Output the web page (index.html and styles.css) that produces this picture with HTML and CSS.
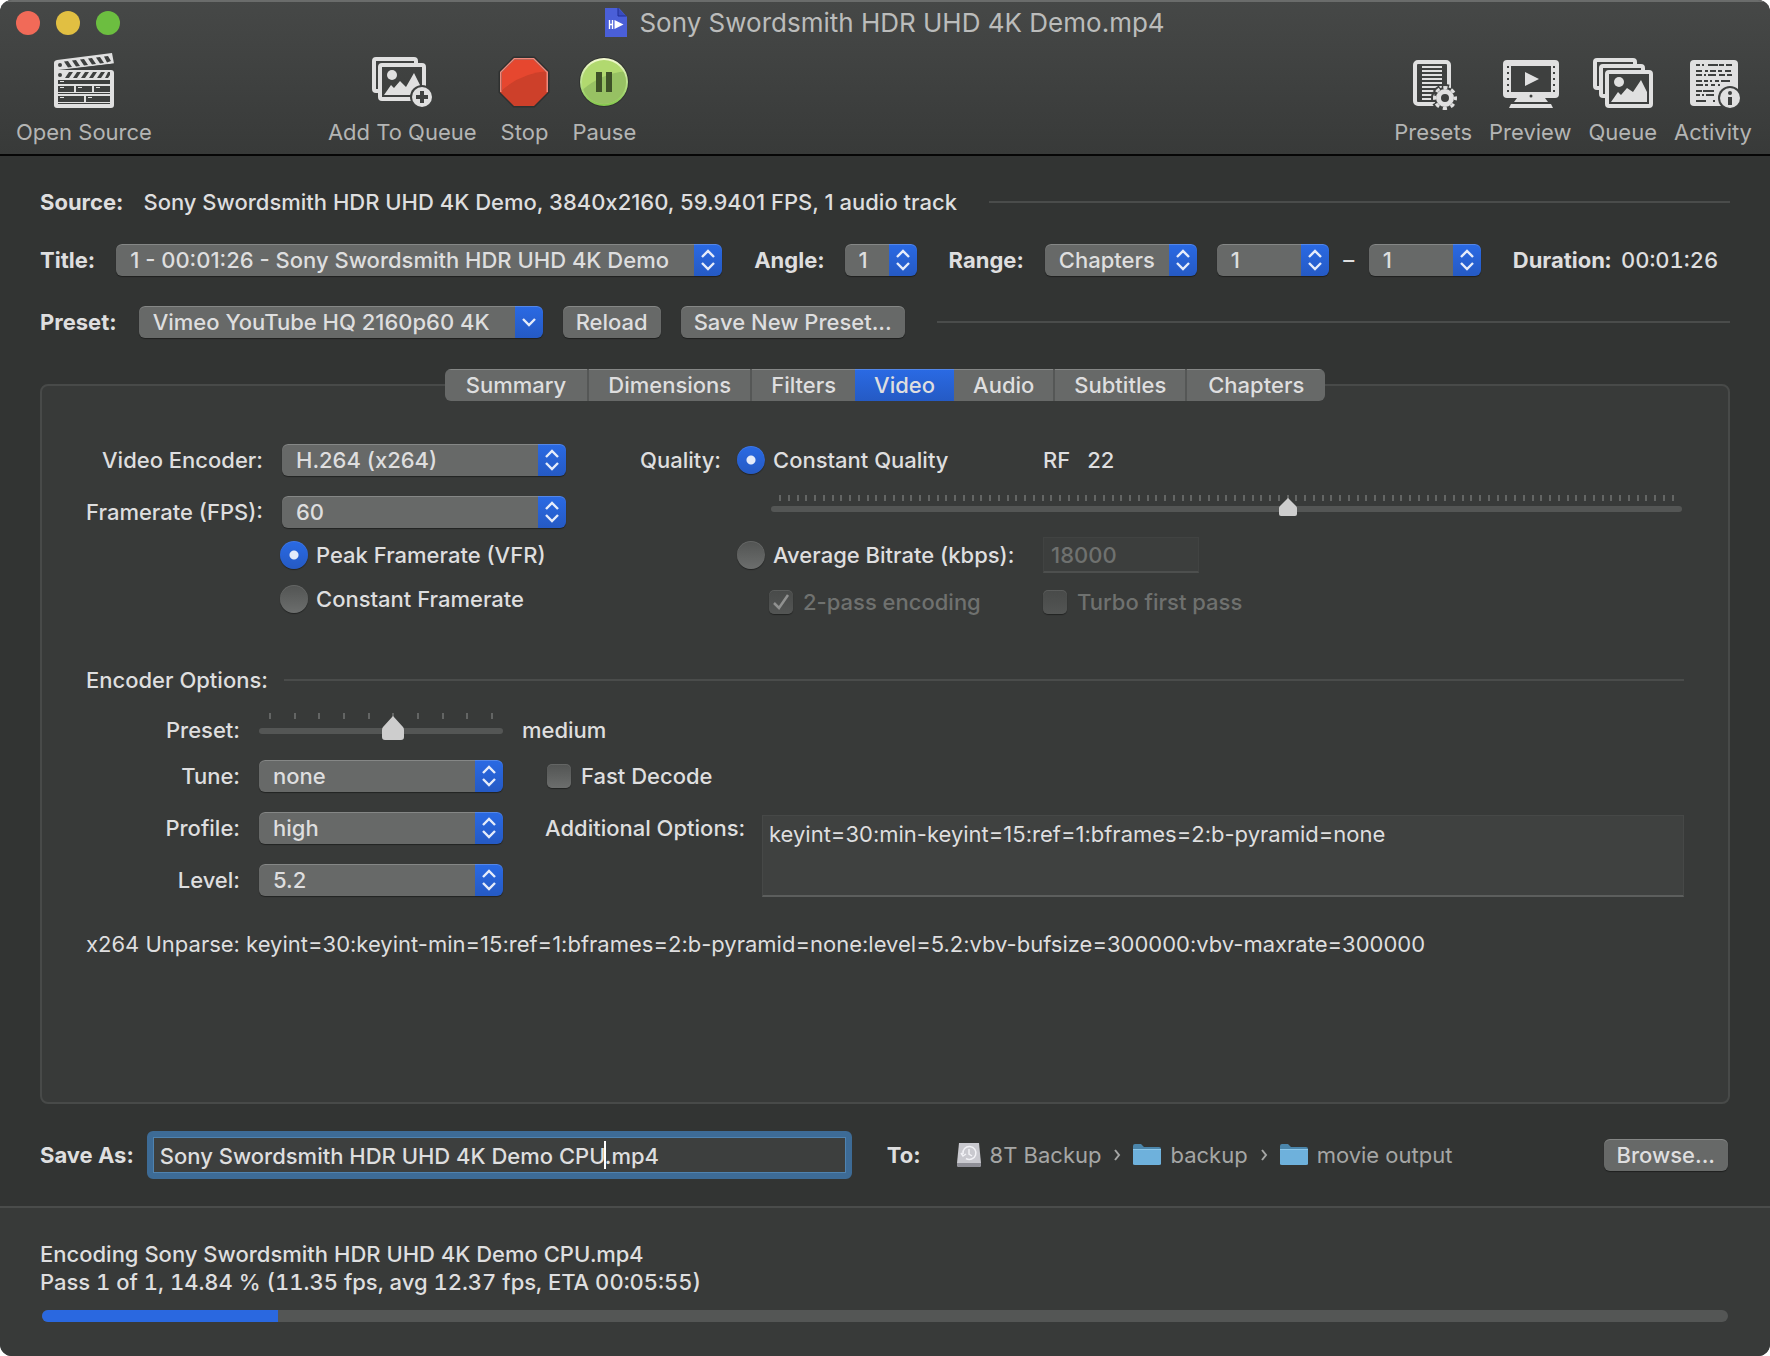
FILE: index.html
```html
<!DOCTYPE html>
<html lang="en">
<head>
<meta charset="utf-8">
<title>Sony Swordsmith HDR UHD 4K Demo.mp4</title>
<link rel="stylesheet" href="styles.css">
</head>
<body>
<div class="window">
  <header class="header">
    <div class="titlebar">
      <div class="lights">
        <button class="light light-close" aria-label="Close"></button>
        <button class="light light-min" aria-label="Minimize"></button>
        <button class="light light-zoom" aria-label="Zoom"></button>
      </div>
      <h1 class="title">
        <svg width="22" height="30" viewBox="0 0 22 30" aria-hidden="true">
          <path d="M0 0h14l8 9v20H0z" fill="#4a5fd8"/>
          <path d="M13 0v8h8" fill="#3a4cc0" stroke="#1e2f96"/>
          <path d="M4.500 12v9M7.500 12v9M4 16.500h4" stroke="#fff" stroke-width="1.400"/>
          <path d="M9.500 12l9 4.500-9 4.500z" fill="#fff"/>
        </svg>
        Sony Swordsmith HDR UHD 4K Demo.mp4
      </h1>
    </div>
    <div class="toolbar">
      <button class="tool tool-open">
        <span class="tool-icon">
          <svg width="60" height="58" viewBox="0 0 60 58" fill="#e0e0e0">
            <path d="M3 7L58 0l2 10.500L0 17.500V10q0-2.500 3-3z"/>
            <path d="M0 17h57q3 0 3 3v32q0 3-3 3H3q-3 0-3-3z"/>
            <g fill="#3e403f">
              <circle cx="6" cy="12" r="2"/><circle cx="6" cy="22" r="2"/>
              <path d="M12 16.500L60 10.500v6.500H12z"/>
              <path d="M10 8.500l4-.5 4 6-4 .5zM18 7.500l4-.5 4 6-4 .5zM26 6.500l4-.5 4 6-4 .5zM34 5.500l4-.5 4 6-4 .5zM42 4.500l4-.5 4 6-4 .5zM50 3.500l4-.5 3 5-4 1.500z"/>
              <path d="M15 19h4l-4 6h-4zM23 19h4l-4 6h-4zM31 19h4l-4 6h-4zM39 19h4l-4 6h-4zM47 19h4l-4 6h-4zM54 19h2v3l-2 3h-3z"/>
              <path d="M4 27h52v4H4zM4 33h16v6H4zM22 33h16v6H22zM40 33h16v6H40zM4 40h52v1H4zM4 43h26v6H4zM32 43h24v6H32zM4 50h52v1H4z"/>
            </g>
            <path d="M6 28h4v1H6zM6 34h4v1H6zM24 34h4v1h-4zM42 34h4v1h-4zM6 44h4v1H6zM34 44h4v1h-4z"/>
          </svg>
        </span>
        Open Source
      </button>
      <button class="tool">
        <span class="tool-icon">
          <svg width="60" height="50" viewBox="0 0 60 50">
            <path d="M6 34H4q-2 0-2-2V4q0-2 2-2h38q2 0 2 2v2" fill="none" stroke="#e0e0e0" stroke-width="4"/>
            <rect x="8" y="8" width="44" height="34" rx="2" fill="none" stroke="#e0e0e0" stroke-width="4"/>
            <circle cx="20" cy="18" r="5" fill="#e0e0e0"/>
            <path d="M12 38l7-10 3 3 6-7 6 6 8-14 6 12v10z" fill="#e0e0e0"/>
            <circle cx="50" cy="40" r="12" fill="#3e403f"/>
            <circle cx="50" cy="40" r="10" fill="#e0e0e0"/>
            <path d="M50 34v12M44 40h12" stroke="#3e403f" stroke-width="4"/>
          </svg>
        </span>
        Add To Queue
      </button>
      <button class="tool">
        <span class="tool-icon tool-icon-round">
          <svg width="52" height="52" viewBox="-2 -2 52 52">
            <defs><clipPath id="oct"><path d="M14 0h20l14 14v20L34 48H14L0 34V14z"/></clipPath></defs>
            <path d="M14 0h20l14 14v20L34 48H14L0 34V14z" fill="#e6472f" stroke="#2f3130" stroke-width="3"/>
            <g clip-path="url(#oct)">
              <path d="M0 34Q20 15 48 13v35H0z" fill="#cd402a"/>
              <path d="M0 34V14L14 0h20l14 14v20" fill="none" stroke="#f08a7c" stroke-width="3"/>
            </g>
          </svg>
        </span>
        Stop
      </button>
      <button class="tool">
        <span class="tool-icon tool-icon-round">
          <svg width="52" height="52" viewBox="-2 -2 52 52">
            <defs>
              <linearGradient id="rim" x1="0" y1="0" x2="0" y2="1"><stop offset="0" stop-color="#f4fad0"/><stop offset="1" stop-color="#84c84c"/></linearGradient>
              <clipPath id="disc"><circle cx="24" cy="24" r="22"/></clipPath>
            </defs>
            <circle cx="24" cy="24" r="25" fill="#303230"/>
            <circle cx="24" cy="24" r="24" fill="url(#rim)"/>
            <circle cx="24" cy="24" r="22" fill="#b1d96f"/>
            <path d="M0 34Q20 15 48 13v35H0z" fill="#97c163" clip-path="url(#disc)"/>
            <path d="M16 14h6v20h-6zM26 14h6v20h-6z" fill="#3f5228"/>
          </svg>
        </span>
        Pause
      </button>
      <span class="toolbar-space"></span>
      <button class="tool tool-right">
        <span class="tool-icon">
          <svg width="48" height="56" viewBox="-4 -6 48 56">
            <rect x="2" y="2" width="34" height="42" rx="3" fill="none" stroke="#e0e0e0" stroke-width="4"/>
            <path d="M9 7h20M9 11h20M9 15h20M9 19h20M9 23h20M9 27h20M9 31h20M9 35h20M9 39h20" stroke="#e0e0e0" stroke-width="2"/>
            <circle cx="32" cy="38" r="11" fill="#3e403f"/>
            <circle cx="32" cy="38" r="11" fill="none" stroke="#3e403f" stroke-width="6" stroke-dasharray="6.640 2" stroke-dashoffset="3.320"/>
            <circle cx="32" cy="38" r="10.500" fill="none" stroke="#e0e0e0" stroke-width="3" stroke-dasharray="4.250 4" stroke-dashoffset="2.100"/>
            <circle cx="32" cy="38" r="6.500" fill="none" stroke="#e0e0e0" stroke-width="5"/>
          </svg>
        </span>
        Presets
      </button>
      <button class="tool tool-right">
        <span class="tool-icon">
          <svg width="58" height="54" viewBox="-2 -4 58 54" fill="#e0e0e0">
            <rect width="56" height="38" y="1" rx="4"/>
            <path d="M14 39h28l3 4H11zM8 45h40l2 4H6z"/>
            <path d="M8 7h40v26H8z" fill="#3e403f"/>
            <path d="M5 7v26M51 7v26" stroke="#3e403f" stroke-width="2" stroke-dasharray="2 4"/>
            <circle cx="28" cy="37" r="1.500" fill="#3e403f"/>
            <path d="M22 13l14 7-14 7z"/>
          </svg>
        </span>
        Preview
      </button>
      <button class="tool tool-right">
        <span class="tool-icon">
          <svg width="60" height="52" viewBox="0 -2 60 52">
            <g fill="none" stroke="#e0e0e0" stroke-width="4">
              <path d="M6 30H4q-2 0-2-2V4q0-2 2-2h36q2 0 2 2v2"/>
              <path d="M12 38h-2q-2 0-2-2V10q0-2 2-2h38q2 0 2 2v2"/>
              <rect x="14" y="14" width="44" height="34" rx="2"/>
            </g>
            <circle cx="26" cy="24" r="5" fill="#e0e0e0"/>
            <path d="M18 44l7-10 3 3 6-7 6 4 8-12 6 12v10z" fill="#e0e0e0"/>
          </svg>
        </span>
        Queue
      </button>
      <button class="tool tool-right">
        <span class="tool-icon">
          <svg width="54" height="54" viewBox="-4 -4 54 54">
            <rect y="1" width="48" height="46" rx="4" fill="#e0e0e0"/>
            <g stroke="#3e403f" stroke-width="2">
              <path d="M6 6h4M12 6h2M18 6h10M29 6h5M36 6h6M6 12h6M15 12h3M20 12h6M28 12h4M35 12h6M6 16h6M14 16h2M18 16h8M29 16h6M37 16h5M6 22h6M14 22h4M20 22h2M25 22h4M31 22h9M6 26h7M15 26h3M21 26h4M28 26h2M6 32h6M13 32h11M6 36h4M12 36h2M16 36h8M6 42h10M23 42h2"/>
            </g>
            <circle cx="40" cy="39" r="12" fill="#3e403f"/>
            <circle cx="40" cy="39" r="10" fill="#e0e0e0"/>
            <circle cx="40" cy="34" r="2" fill="#3e403f"/>
            <path d="M38 38h4v8h-4z" fill="#3e403f"/>
          </svg>
        </span>
        Activity
      </button>
    </div>
  </header>

  <main class="content">
    <div class="row row-source">
      <strong class="head">Source:</strong>
      <span class="source-text">Sony Swordsmith HDR UHD 4K Demo, 3840x2160, 59.9401 FPS, 1 audio track</span>
      <span class="rule"></span>
    </div>

    <div class="row row-title">
      <label class="head" for="title">Title:</label>
      <select id="title" class="popup popup-title"><option>1 - 00:01:26 - Sony Swordsmith HDR UHD 4K Demo</option></select>
      <label class="head" for="angle">Angle:</label>
      <select id="angle" class="popup popup-angle"><option>1</option></select>
      <label class="head" for="range">Range:</label>
      <select id="range" class="popup popup-range"><option>Chapters</option></select>
      <select class="popup popup-chapter" aria-label="First chapter"><option>1</option></select>
      <span class="dash">–</span>
      <select class="popup popup-chapter" aria-label="Last chapter"><option>1</option></select>
      <span class="duration"><strong class="head">Duration:</strong><span>00:01:26</span></span>
    </div>

    <div class="row row-preset">
      <label class="head" for="preset">Preset:</label>
      <select id="preset" class="popup popup-menu"><option>Vimeo YouTube HQ 2160p60 4K</option></select>
      <button class="button">Reload</button>
      <button class="button">Save New Preset...</button>
      <span class="rule"></span>
    </div>

    <div class="tabs" role="tablist">
      <button class="tab" role="tab">Summary</button>
      <button class="tab" role="tab">Dimensions</button>
      <button class="tab" role="tab">Filters</button>
      <button class="tab tab-on" role="tab" aria-selected="true">Video</button>
      <button class="tab" role="tab">Audio</button>
      <button class="tab" role="tab">Subtitles</button>
      <button class="tab" role="tab">Chapters</button>
    </div>

    <section class="panel" role="tabpanel">
      <div class="video">
        <div class="encoder">
          <label class="caption" for="encoder">Video Encoder:</label>
          <select id="encoder" class="popup"><option>H.264 (x264)</option></select>
          <label class="caption" for="fps">Framerate (FPS):</label>
          <select id="fps" class="popup"><option>60</option></select>
          <div class="modes">
            <label class="choice"><input class="radio" type="radio" name="mode" checked>Peak Framerate (VFR)</label>
            <label class="choice"><input class="radio" type="radio" name="mode">Constant Framerate</label>
          </div>
        </div>
        <div class="quality">
          <span class="quality-caption">Quality:</span>
          <div class="quality-body">
            <div class="quality-row quality-rf">
              <label class="choice"><input class="radio" type="radio" name="quality" checked>Constant Quality</label>
              <span class="rf"><span>RF</span><output>22</output></span>
            </div>
            <div class="slider slider-quality">
              <div class="ticks" data-count="103"></div>
              <input class="range range-small" type="range" min="0" max="102" value="58" aria-label="Constant quality">
            </div>
            <div class="quality-row quality-rate">
              <label class="choice"><input class="radio" type="radio" name="quality">Average Bitrate (kbps):</label>
              <input class="rate" type="text" value="18000" aria-label="Average bitrate" disabled>
            </div>
            <div class="quality-row quality-pass">
              <label class="choice choice-off choice-indent"><input class="check" type="checkbox" checked disabled>2-pass encoding</label>
              <label class="choice choice-off"><input class="check" type="checkbox" disabled>Turbo first pass</label>
            </div>
          </div>
        </div>
      </div>

      <div class="options-head"><span>Encoder Options:</span><span class="rule"></span></div>

      <div class="speed">
        <label class="caption" for="speed">Preset:</label>
        <div class="slider slider-speed">
          <div class="ticks" data-count="10"></div>
          <input id="speed" class="range range-large" type="range" min="0" max="9" value="5">
        </div>
        <output class="speed-value" for="speed">medium</output>
      </div>

      <div class="tuning">
        <div class="tuning-left">
          <label class="caption" for="tune">Tune:</label>
          <select id="tune" class="popup"><option>none</option></select>
          <label class="caption" for="profile">Profile:</label>
          <select id="profile" class="popup"><option>high</option></select>
          <label class="caption" for="level">Level:</label>
          <select id="level" class="popup"><option>5.2</option></select>
        </div>
        <div class="tuning-right">
          <label class="choice choice-wide"><input class="check" type="checkbox">Fast Decode</label>
          <div class="extra">
            <label class="extra-label" for="extra">Additional Options:</label>
            <textarea id="extra" class="extra-text" spellcheck="false">keyint=30:min-keyint=15:ref=1:bframes=2:b-pyramid=none</textarea>
          </div>
        </div>
      </div>

      <p class="unparse">x264 Unparse: keyint=30:keyint-min=15:ref=1:bframes=2:b-pyramid=none:level=5.2:vbv-bufsize=300000:vbv-maxrate=300000</p>
    </section>

    <div class="save">
      <label class="head" for="save">Save As:</label>
      <div class="save-field">
        <input id="save" class="save-input" type="text" value="Sony Swordsmith HDR UHD 4K Demo CPU.mp4" spellcheck="false">
        <span class="caret"></span>
      </div>
      <strong class="head head-to">To:</strong>
      <nav class="path">
        <a class="place" href="#">
          <svg width="24" height="26" viewBox="0 0 24 26" aria-hidden="true">
            <path d="M2 1h20l2 20v2q0 2-2 2H2q-2 0-2-2v-2z" fill="#c9c9cf"/>
            <path d="M0 21h24v2q0 2-2 2H2q-2 0-2-2z" fill="#8f8f97"/>
            <path d="M6 12a6.500 6.500 0 1 1 3 4.500M4 11l2 3 3-2M12 7v5l3 2" fill="none" stroke="#f2f2f6" stroke-width="1.500"/>
          </svg>8T Backup</a>
        <svg class="arrow" width="8" height="12" viewBox="0 0 8 12"><path d="M2 1l4 5-4 5" fill="none" stroke="#a5a6a5" stroke-width="2"/></svg>
        <a class="place" href="#">
          <svg width="28" height="22" viewBox="0 0 28 22" aria-hidden="true"><path d="M0 2q0-2 2-2h6l3 3h15q2 0 2 2v4H0z" fill="#4b86ac"/><path d="M0 5h28v15q0 1-2 1H2q-2 0-2-1z" fill="#6eb1dc"/><path d="M0 5h28v1H0z" fill="#8cc7ea"/></svg>backup</a>
        <svg class="arrow" width="8" height="12" viewBox="0 0 8 12"><path d="M2 1l4 5-4 5" fill="none" stroke="#a5a6a5" stroke-width="2"/></svg>
        <a class="place" href="#">
          <svg width="28" height="22" viewBox="0 0 28 22" aria-hidden="true"><path d="M0 2q0-2 2-2h6l3 3h15q2 0 2 2v4H0z" fill="#4b86ac"/><path d="M0 5h28v15q0 1-2 1H2q-2 0-2-1z" fill="#6eb1dc"/><path d="M0 5h28v1H0z" fill="#8cc7ea"/></svg>movie output</a>
      </nav>
      <button class="button">Browse...</button>
    </div>
  </main>

  <footer class="status">
    <p class="status-line">Encoding Sony Swordsmith HDR UHD 4K Demo CPU.mp4</p>
    <p class="status-line">Pass 1 of 1, 14.84 % (11.35 fps, avg 12.37 fps, ETA 00:05:55)</p>
    <div class="meter"><progress class="progress" max="100" value="14" aria-label="Encoding progress"></progress></div>
  </footer>
</div>
<script src="script.js"></script>
</body>
</html>
```
FILE: styles.css
```css
* { box-sizing: border-box; }

html { background: #fff; }

body {
  margin: 0;
  font: 500 22px/28px Inter, "Liberation Sans", sans-serif;
  color: #dededf;
}

button, input, select, textarea { margin: 0; font: inherit; color: inherit; }
p, h1 { margin: 0; }

.window {
  display: flex;
  flex-direction: column;
  min-height: 100vh;
  overflow: hidden;
  border-radius: 12px;
  background: #323433;
}

/* Title bar and toolbar */
.header {
  padding-bottom: 8px;
  border-bottom: 2px solid #060606;
  background: linear-gradient(#464847, #383a39);
  box-shadow: inset 0 2px 0 #6a6c6b;
  font-weight: 400;
}

.titlebar {
  display: grid;
  grid-template-columns: 1fr auto 1fr;
  align-items: center;
  height: 44px;
  padding: 2px 16px 0;
}

.lights { display: flex; gap: 16px; }
.light { width: 24px; height: 24px; padding: 0; border: 0; border-radius: 50%; }
.light-close { background: #f16a58; }
.light-min { background: #e1bf42; }
.light-zoom { background: #6cbe40; }

.title {
  display: flex;
  align-items: center;
  gap: 12px;
  font-size: 26px;
  font-weight: 400;
  color: #bbbcbb;
}

.toolbar {
  display: flex;
  align-items: flex-start;
  gap: 24px;
  padding: 10px 18px 0 16px;
}

.tool {
  display: flex;
  flex-direction: column;
  align-items: center;
  gap: 8px;
  padding: 0;
  border: 0;
  background: none;
  color: #b4b5b4;
  white-space: nowrap;
}

.tool-icon {
  display: flex;
  align-items: center;
  justify-content: center;
  height: 56px;
}

.tool-icon-round { margin: 0 -4px; }
.tool-open { margin-right: 152px; }
.toolbar-space { flex: 1; }
.tool-right + .tool-right { margin-left: -7px; }

/* Main area */
.content {
  display: flex;
  flex: 1;
  flex-direction: column;
  padding: 30px 40px 0;
}

.head { font-weight: 700; white-space: nowrap; }

.row { display: flex; align-items: center; height: 32px; white-space: nowrap; }
.row-source { gap: 20px; }
.row-title { margin-top: 26px; }
.row-preset { margin-top: 30px; gap: 20px; }

/* Keep the x of the frame size a letter */
.source-text { font-variant-ligatures: no-contextual; }

.rule { flex: 1; height: 2px; background: #4a4c4b; }
.row .rule { margin-left: 12px; }

.popup {
  width: 100%;
  height: 32px;
  padding: 0 34px 0 14px;
  border: 0;
  border-radius: 6px;
  outline: 0;
  appearance: none;
  background: #676968 url("data:image/svg+xml,%3Csvg xmlns='http://www.w3.org/2000/svg' width='28' height='32'%3E%3ClinearGradient id='b' x2='0' y2='1'%3E%3Cstop stop-color='%232a6ae4'/%3E%3Cstop offset='1' stop-color='%23255ac4'/%3E%3C/linearGradient%3E%3Cpath fill='url(%23b)' d='M0 0h28v32H0z'/%3E%3Cpath d='M8 13l6-6 6 6M8 19l6 6 6-6' fill='none' stroke='%23e6ecfa' stroke-width='2.400'/%3E%3C/svg%3E") right / 28px 32px no-repeat;
  box-shadow: inset 0 1px 0 rgba(255, 255, 255, 0.2), 0 1px 1px rgba(0, 0, 0, 0.4);
}

.popup-menu {
  width: 404px;
  background-image: url("data:image/svg+xml,%3Csvg xmlns='http://www.w3.org/2000/svg' width='28' height='32'%3E%3ClinearGradient id='b' x2='0' y2='1'%3E%3Cstop stop-color='%232a6ae4'/%3E%3Cstop offset='1' stop-color='%23255ac4'/%3E%3C/linearGradient%3E%3Cpath fill='url(%23b)' d='M0 0h28v32H0z'/%3E%3Cpath d='M8 13l6 6 6-6' fill='none' stroke='%23e6ecfa' stroke-width='2.400'/%3E%3C/svg%3E");
}

.row-preset .popup-menu { margin-left: 2px; }
.popup-title { width: 606px; margin: 0 32px 0 21px; }
.popup-angle { width: 72px; margin: 0 32px 0 20px; }
.popup-range { width: 152px; margin: 0 20px 0 21px; }
.popup-chapter { width: 112px; }
.dash { width: 40px; text-align: center; }
.duration { display: flex; gap: 10px; margin-left: 32px; font-variant-numeric: tabular-nums; }

.button {
  height: 32px;
  padding: 0 13px;
  border: 0;
  border-radius: 6px;
  background: #676968;
  box-shadow: inset 0 1px 0 rgba(255, 255, 255, 0.2), 0 1px 1px rgba(0, 0, 0, 0.4);
  white-space: nowrap;
}

.tabs {
  position: relative;
  display: flex;
  align-self: center;
  height: 32px;
  margin-top: 31px;
  border-radius: 6px;
  overflow: hidden;
  background: #676968;
}

.tab {
  padding: 0 19px;
  border: 0;
  border-left: 2px solid #555756;
  background: none;
  box-shadow: inset 0 1px 0 rgba(255, 255, 255, 0.2);
}
.tab:first-child, .tab-on, .tab-on + .tab { border-left: 0; }
.tab:first-child, .tab:last-child { padding: 0 21px; }
.tab-on { background: linear-gradient(#2a6ae4, #255ac4); }

.panel {
  flex: 1;
  margin-top: -17px;
  padding: 58px 44px 24px;
  border: 2px solid #484a49;
  border-radius: 8px;
  background: #383a39;
}

.caption { text-align: right; white-space: nowrap; }

.video { display: flex; gap: 74px; }

.encoder {
  display: grid;
  grid-template-columns: 177px 284px;
  gap: 20px 19px;
  align-content: start;
  align-items: center;
}

.modes {
  display: flex;
  flex-direction: column;
  grid-column: 2;
  gap: 16px;
  margin: -7px 0 0 -2px;
}

.choice { display: flex; align-items: center; gap: 8px; white-space: nowrap; }
.choice-wide { height: 32px; gap: 10px; }
.choice-off { gap: 10px; color: #6f716f; }
.choice-indent { padding-left: 32px; }

.radio, .check {
  flex: none;
  appearance: none;
  background: linear-gradient(#525453, #6c6e6d);
  box-shadow: inset 0 1px 0 rgba(255, 255, 255, 0.1), 0 1px 1px rgba(0, 0, 0, 0.4);
}
.radio { width: 28px; height: 28px; border-radius: 50%; }
.radio:checked { background: radial-gradient(circle, #e4ebfa 4px, transparent 5px), linear-gradient(#2a6ae4, #255ac4); }
.check { width: 24px; height: 24px; border-radius: 5px; }
.check:disabled { background: linear-gradient(#484a49, #535554); }
.check:checked {
  background: url("data:image/svg+xml,%3Csvg xmlns='http://www.w3.org/2000/svg' width='24' height='24'%3E%3Cpath d='M5 13l5 5 9-13' fill='none' stroke='%23909190' stroke-width='2.500'/%3E%3C/svg%3E"), linear-gradient(#484a49, #535554);
}

.quality { display: flex; flex: 1; gap: 17px; }
.quality-caption { width: 80px; line-height: 32px; }
.quality-body { flex: 1; }
.quality-row { display: grid; grid-template-columns: 306px 1fr; align-items: center; }
.quality-rf { height: 32px; }
.quality-rate { height: 36px; margin-top: 19px; }
.quality-pass { margin-top: 15px; }
.rf { display: flex; gap: 17px; }

.rate {
  width: 156px;
  height: 36px;
  padding: 0 7px;
  border: 1px solid #414342;
  border-bottom: 2px solid #4d4f4e;
  background: #3c3e3d;
  color: #6f716f;
}

.ticks { display: flex; justify-content: space-between; height: 6px; }
.tick { width: 2px; background: #636564; }

.slider-quality { height: 23px; margin: 19px 2px 0 34px; }
.slider-quality .ticks { padding: 0 8px; }
.slider-speed { width: 244px; height: 27px; }
.slider-speed .ticks { padding: 0 10px; }

.range { display: block; width: 100%; appearance: none; background: none; }
.range::-webkit-slider-runnable-track { height: 6px; border-radius: 3px; background: #545655; }
.range::-webkit-slider-thumb { appearance: none; }
.range-small { height: 18px; margin-top: -3px; padding-top: 4px; }
.range-small::-webkit-slider-thumb {
  width: 18px;
  height: 18px;
  margin-top: -8px;
  background: url("data:image/svg+xml,%3Csvg xmlns='http://www.w3.org/2000/svg' width='18' height='18'%3E%3Cpath d='M9 0l8 8q1 1 1 2v6q0 2-2 2H2q-2 0-2-2v-6q0-1 1-2z' fill='%23cdcdcd'/%3E%3C/svg%3E");
}
.range-large { height: 24px; margin-top: -3px; padding-top: 6px; }
.range-large::-webkit-slider-thumb {
  width: 22px;
  height: 24px;
  margin-top: -12px;
  background: url("data:image/svg+xml,%3Csvg xmlns='http://www.w3.org/2000/svg' width='22' height='24'%3E%3Cpath d='M11 0l10 11q1 1 1 3v7q0 3-3 3H3q-3 0-3-3v-7q0-2 1-3z' fill='%23cdcdcd'/%3E%3C/svg%3E");
}

.options-head { display: flex; align-items: center; gap: 16px; margin-top: 50px; }

.speed {
  display: grid;
  grid-template-columns: 154px 244px 1fr;
  column-gap: 19px;
  margin-top: 19px;
  line-height: 34px;
}

.tuning { display: flex; gap: 42px; margin-top: 13px; }
.tuning-left {
  display: grid;
  grid-template-columns: 154px 244px;
  gap: 20px 19px;
  align-content: start;
  align-items: center;
}
.tuning-right { flex: 1; }
.choice-wide { padding-left: 2px; }

.extra { display: flex; gap: 16px; margin-top: 20px; }
.extra-label { width: 201px; line-height: 32px; white-space: nowrap; }
.extra-text {
  flex: 1;
  height: 82px;
  margin-top: 3px;
  padding: 4px 6px;
  border: 1px solid #464847;
  border-bottom: 2px solid #5c5e5d;
  outline: 0;
  resize: none;
  background: #3f4140;
}

.extra-text, .unparse { font-weight: 400; }
.unparse { margin-top: 33px; }

/* Destination row */
.save { display: flex; align-items: center; padding: 27px 2px 27px 0; }
.save-field { position: relative; flex: 0 1 705px; margin: 0 35px 0 13px; }
.save-input {
  display: block;
  width: 100%;
  height: 48px;
  padding: 2px 7px 0;
  border: 6px solid #3d6b96;
  border-radius: 6px;
  outline: 0;
  background: #3d3f3e;
  box-shadow: inset 0 0 0 1px #4f83b0;
}
.caret {
  position: absolute;
  top: 10px;
  left: 457px;
  width: 2px;
  height: 28px;
  background: #fff;
}
.head-to { margin-right: 36px; }

.path { display: flex; flex: 1; align-items: center; gap: 12px; font-weight: 400; white-space: nowrap; }
.place { display: flex; align-items: center; gap: 9px; color: #a5a6a5; text-decoration: none; }

/* Encoding status */
.status {
  padding: 32px 40px 34px;
  border-top: 2px solid #4a4c4b;
  background: #383a39;
  font-variant-numeric: tabular-nums;
}
.meter { padding: 14px 2px 0; }
.progress {
  display: block;
  width: 100%;
  height: 12px;
  overflow: hidden;
  border: 0;
  border-radius: 6px;
  appearance: none;
  background: #545655;
}
.progress::-webkit-progress-bar { background: #545655; }
.progress::-webkit-progress-value { background: #2a68e0; }
```
FILE: script.js
```js
// Fill each slider scale with its tick marks.
document.querySelectorAll('.ticks').forEach(function (scale) {
  for (var i = 0; i < Number(scale.dataset.count); i++) {
    var tick = document.createElement('span');
    tick.className = 'tick';
    scale.appendChild(tick);
  }
});
```
